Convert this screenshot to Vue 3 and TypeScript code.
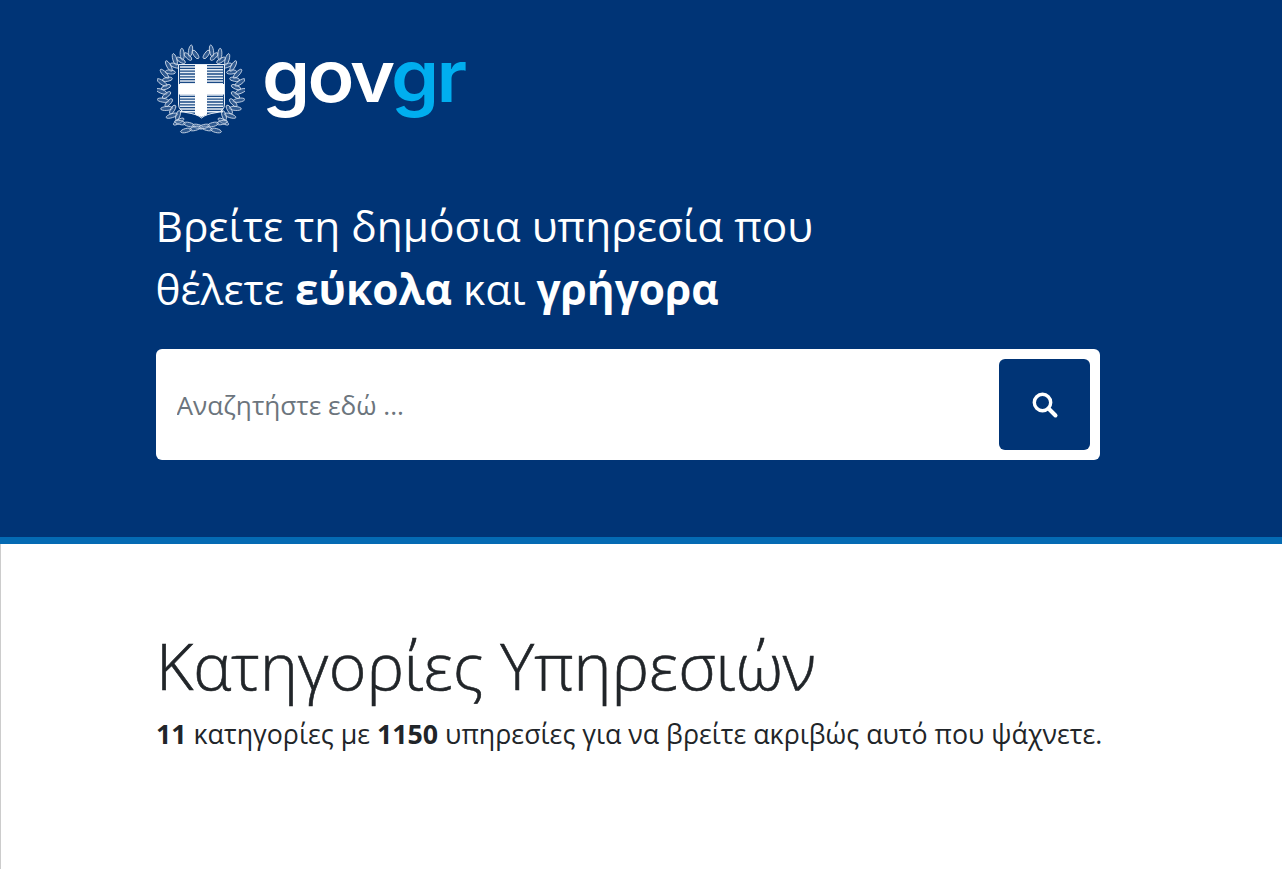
<script setup lang="ts">
interface Leaf { x: number; y: number; r: number; rx: number }
const cx = 44, cy = 45
const leaves: Leaf[] = []
for (const side of [-1, 1]) {
  for (let a = 9; a <= 148; a += 6.5) {
    const rad = (a * Math.PI) / 180
    const outer = Math.round(a / 6.5) % 2 === 0
    const ring = outer ? 39.5 : 35
    leaves.push({
      x: cx + side * ring * Math.sin(rad),
      y: cy - ring * Math.cos(rad),
      r: side * (a + (outer ? 65 : 115)),
      rx: outer ? 6 : 5,
    })
  }
  // crossing stems at the foot of the wreath
  for (let t = 0; t <= 4; t++) {
    leaves.push({
      x: cx + side * (21 - t * 9),
      y: 78.5 + t * 2,
      r: side * -14,
      rx: 5.5,
    })
  }
}
const stripes = Array.from({ length: 17 }, (_, i) => 23 + i * 2.8)
</script>

<template>
  <div class="page">
    <header class="hero">
      <div class="wrap">
        <div class="brand">
          <svg class="emblem" viewBox="0 0 88 90" width="88" height="90" aria-hidden="true">
            <g fill="#5f7fa9" fill-opacity="0.5" stroke="#d5e0ee" stroke-width="0.8">
              <ellipse
                v-for="(l, i) in leaves"
                :key="i"
                cx="0"
                cy="0"
                :rx="l.rx"
                ry="2"
                :transform="`translate(${l.x} ${l.y}) rotate(${l.r})`"
              />
            </g>
            <path
              d="M21.5 20.5 H67.5 V60 Q67.5 67 60 68.5 Q49 70 44.5 74 Q40 70 29 68.5 Q21.5 67 21.5 60 Z"
              fill="#1b4a85"
              stroke="#e6edf5"
              stroke-width="1"
            />
            <g stroke="#e6edf5" stroke-width="1.5">
              <line v-for="y in stripes" :key="y" x1="23" :y1="y" x2="66" :y2="y" />
            </g>
            <path
              d="M38 21 H50 V40 H67 V50.5 H50 V70.5 L44.5 73 L38 70.5 V50.5 H22 V40 H38 Z"
              fill="#fff"
            />
          </svg>
          <span class="logo">gov<span class="logo-accent">gr</span></span>
        </div>

        <h2 class="tagline">
          Βρείτε τη δημόσια υπηρεσία που<br />
          θέλετε <strong>εύκολα</strong> και <strong>γρήγορα</strong>
        </h2>

        <form class="search" @submit.prevent>
          <input class="search-input" type="text" placeholder="Αναζητήστε εδώ ..." />
          <button class="search-btn" type="submit" aria-label="Αναζήτηση">
            <svg class="search-icon" viewBox="0 0 28 28" width="28" height="28" fill="none" stroke="#fff" aria-hidden="true">
              <circle cx="11.5" cy="11.5" r="8.2" stroke-width="3.4" />
              <path d="M17.5 17.5 L24.5 24.5" stroke-width="4" stroke-linecap="round" />
            </svg>
          </button>
        </form>
      </div>
    </header>

    <main class="content">
      <div class="wrap">
        <h1 class="title">Κατηγορίες Υπηρεσιών</h1>
        <p class="lead">
          <strong>11</strong> κατηγορίες με <strong>1150</strong> υπηρεσίες για να βρείτε ακριβώς αυτό που ψάχνετε.
        </p>
      </div>
    </main>
  </div>
</template>

<style>
html,
body {
  margin: 0;
  background: #fff;
}
</style>

<style scoped>
.page {
  height: 869px;
  overflow: hidden;
  display: flex;
  flex-direction: column;
  font-family: "Open Sans", "Noto Sans", sans-serif;
}
.hero {
  height: 537px;
  flex: none;
  background: #003476;
  border-bottom: 7px solid #046ab3;
  color: #fff;
}
.wrap {
  width: 1000px;
  margin-left: 155.5px;
}
.brand {
  display: flex;
  align-items: flex-start;
  padding-top: 44px;
  height: 90px;
}
.emblem {
  flex: none;
  margin-left: 1.5px;
  filter: blur(0.35px);
}
.logo {
  margin-left: 17px;
  margin-top: -12px;
  font-family: Inter, sans-serif;
  font-size: 72px;
  font-weight: 600;
  line-height: 88px;
  letter-spacing: -2.6px;
  color: #fff;
  transform: scaleX(1.07);
  transform-origin: left center;
}
.logo-accent {
  color: #00aeef;
}
.tagline {
  margin: 61px 0 0;
  font-size: 42.4px;
  font-weight: 400;
  line-height: 62.5px;
}
.tagline strong {
  font-weight: 700;
}
.search {
  box-sizing: border-box;
  margin-top: 29px;
  height: 111px;
  padding: 10px 10px 10px 0;
  background: #fff;
  border-radius: 6px;
  display: flex;
  width: 944.5px;
}
.search-input {
  flex: 1;
  min-width: 0;
  border: 0;
  outline: 0;
  background: transparent;
  padding: 0 21px;
  font: 400 26.2px "Open Sans", sans-serif;
  color: #212529;
}
.search-input::placeholder {
  color: #6c757d;
  opacity: 1;
}
.search-btn {
  flex: none;
  width: 91.5px;
  height: 91px;
  border: 0;
  padding: 0;
  border-radius: 6px;
  background: #003476;
  display: flex;
  align-items: center;
  justify-content: center;
}
.search-icon {
  margin-left: 2px;
}
.content {
  flex: 1;
  border-left: 1px solid #ccc;
  color: #212529;
}
.content .wrap {
  margin-left: 155px;
}
.title {
  margin: 83px 0 0;
  font-size: 64.3px;
  font-weight: 300;
  line-height: 76px;
  -webkit-text-stroke: 0.6px #212529;
}
.lead {
  margin: 13px 0 0;
  font-size: 26.78px;
  line-height: 36px;
  white-space: nowrap;
}
.lead strong {
  font-weight: 700;
}
</style>
